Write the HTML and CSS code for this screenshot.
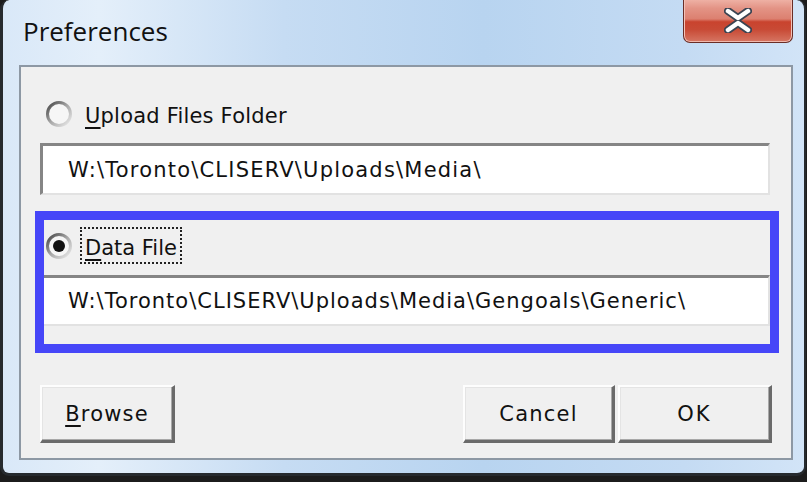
FILE: index.html
```html
<!doctype html>
<html lang="en">
  <head>
    <meta charset="utf-8">
    <title>Preferences</title>
    <link rel="stylesheet" href="styles.css">
  </head>
  <body>
    <div class="window">
      <div class="titlebar">
        <div class="title">Preferences</div>
        <div class="close">
          <svg width="28" height="25" viewBox="0 0 28 25">
            <path d="M4 3 L14 10 L24 3 M4 22 L14 15 L24 22" fill="none" stroke="#3b4452" stroke-width="8" stroke-linecap="round" stroke-linejoin="round"/>
            <path d="M4 3 L14 10 L24 3 M4 22 L14 15 L24 22" fill="none" stroke="#ffffff" stroke-width="4.5" stroke-linecap="round" stroke-linejoin="round"/>
          </svg>
        </div>
      </div>

      <div class="client">
        <div class="option">
          <svg class="radio" width="28" height="28" viewBox="0 0 28 28">
            <defs>
              <linearGradient id="ring1" x1="0" y1="0" x2="1" y2="1">
                <stop offset="0" stop-color="#444"/>
                <stop offset="0.5" stop-color="#a8a8a8"/>
                <stop offset="1" stop-color="#ececec"/>
              </linearGradient>
            </defs>
            <circle cx="14" cy="14" r="11.5" fill="#f6f6f6" stroke="url(#ring1)" stroke-width="3"/>
          </svg>
          <span class="label"><u>U</u>pload Files Folder</span>
        </div>
        <div class="field">W:\Toronto\CLISERV\Uploads\Media\</div>

        <div class="option">
          <svg class="radio" width="28" height="28" viewBox="0 0 28 28">
            <defs>
              <linearGradient id="ring2" x1="0" y1="0" x2="1" y2="1">
                <stop offset="0" stop-color="#444"/>
                <stop offset="0.5" stop-color="#a8a8a8"/>
                <stop offset="1" stop-color="#ececec"/>
              </linearGradient>
            </defs>
            <circle cx="14" cy="14" r="11.5" fill="#f6f6f6" stroke="url(#ring2)" stroke-width="3"/>
            <circle cx="14" cy="14" r="6" fill="#111"/>
          </svg>
          <span class="label focused"><u>D</u>ata File</span>
        </div>
        <div class="field second">W:\Toronto\CLISERV\Uploads\Media\Gengoals\Generic\</div>

        <div class="buttons">
          <div class="btn browse"><span><u>B</u>rowse</span></div>
          <div class="btn cancel">Cancel</div>
          <div class="btn ok">OK</div>
        </div>

        <div class="highlight"></div>
      </div>
    </div>
  </body>
</html>
```

FILE: styles.css
```css
html, body {
  margin: 0;
  width: 807px;
  height: 482px;
  overflow: hidden;
  background-color: #1c1c1c;
}
.window {
  box-sizing: border-box;
  width: 806px;
  height: 476px;
  border: 3px solid #262a2e;
  border-top: none;
  border-right-width: 2px;
  border-radius: 9px;
  padding: 0 11px 13px 16px;
  background: linear-gradient(to right, #d9e8f8 0%, #e4effa 12%, #c6dcf3 35%, #b8d4f0 60%, #c4dbf3 85%, #d2e4f7 100%);
  display: flex;
  flex-direction: column;
}
.titlebar {
  height: 65px;
  display: flex;
  align-items: flex-start;
  flex-shrink: 0;
}
.title {
  font-family: "Open Sans", sans-serif;
  font-size: 26px;
  line-height: 30px;
  color: #111;
  margin: 16px 0 0 4px;
}
.close {
  margin-left: auto;
  box-sizing: border-box;
  width: 110px;
  height: 43px;
  border: 1px solid #6a2d26;
  border-top: none;
  border-radius: 0 0 7px 7px;
  background: linear-gradient(#eeb0a4 0%, #e39385 20%, #dc8070 45%, #c9432e 52%, #c84a35 70%, #d67663 100%);
  box-shadow: inset 0 -1px 0 #f0b8ac, inset 1px 0 0 #f3c2b8, inset -1px 0 0 #f3c2b8;
  display: flex;
  align-items: center;
  justify-content: center;
  padding-bottom: 1px;
}
.client {
  position: relative;
  flex: 1;
  background-color: #f0f0f0;
  border: 2px solid #8d98a4;
  padding: 28px 21px 15px 19px;
  display: flex;
  flex-direction: column;
  font-family: "DejaVu Sans", sans-serif;
  font-size: 21px;
  color: #111;
}
.option {
  height: 37px;
  display: flex;
  align-items: center;
  padding-left: 5px;
  flex-shrink: 0;
}
.radio {
  flex-shrink: 0;
  margin-right: 7px;
}
.label {
  box-sizing: border-box;
  height: 37px;
  line-height: 39px;
  padding: 0 3px;
  border: 2px dotted transparent;
  letter-spacing: 0.2px;
}
.label.focused {
  border-color: #222;
  letter-spacing: 0;
}
u {
  text-decoration-thickness: 2px;
  text-underline-offset: 4px;
}
.field {
  box-sizing: border-box;
  height: 52px;
  margin-top: 11px;
  margin-bottom: 32px;
  background-color: #fff;
  border-style: solid;
  border-width: 3px 2px 2px 3px;
  border-color: #858585 #e2e2e2 #e2e2e2 #858585;
  padding-left: 25px;
  display: flex;
  align-items: center;
  letter-spacing: 1.2px;
  white-space: nowrap;
  flex-shrink: 0;
}
.field.second {
  height: 51px;
  margin-bottom: 0;
  letter-spacing: 1px;
}
.buttons {
  margin-top: auto;
  margin-right: -2px;
  display: flex;
  gap: 3px;
}
.btn {
  box-sizing: border-box;
  height: 58px;
  background-color: #f0f0f0;
  border-style: solid;
  border-width: 2px 3px 3px 2px;
  border-color: #fdfdfd #6a6a6a #6a6a6a #fdfdfd;
  box-shadow: inset -1px -1px 0 #a8a8a8, inset 1px 1px 0 #e4e4e4;
  display: flex;
  align-items: center;
  justify-content: center;
  letter-spacing: 1.2px;
}
.browse {
  width: 135px;
  margin-right: auto;
}
.cancel {
  width: 152px;
}
.ok {
  width: 154px;
  letter-spacing: 2px;
}
.highlight {
  position: absolute;
  left: 14px;
  top: 144px;
  width: 744px;
  height: 142px;
  box-sizing: border-box;
  border: 9px solid #4646f8;
}
```
